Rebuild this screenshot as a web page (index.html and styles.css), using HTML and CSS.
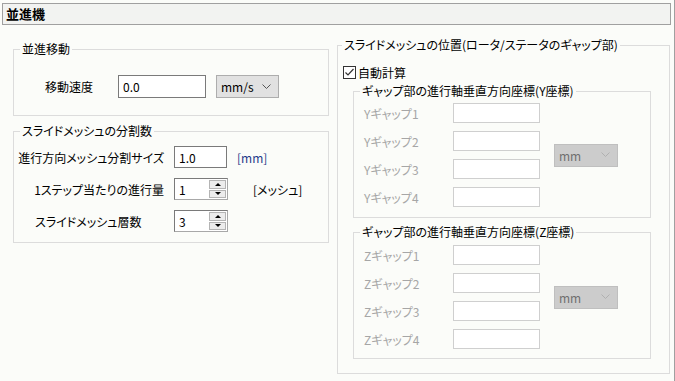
FILE: index.html
```html
<!DOCTYPE html>
<html lang="ja">
<head>
  <meta charset="UTF-8">
  <title>並進機</title>
  <link rel="stylesheet" href="styles.css">
</head>
<body>

  <div class="title-bar">並進機</div>

  <div class="content">
    <div class="col-left">
      <fieldset class="group g-move">
        <legend>並進移動</legend>
        <div class="move-row">
          <span class="move-label">移動速度</span>
          <input class="field w-speed" type="text" value="0.0">
          <div class="combo w-unit">
            <span>mm/s</span>
            <svg class="chev" width="9" height="6" viewBox="0 0 9 6"><polyline points="0.5,0.5 4.5,4.5 8.5,0.5" fill="none" stroke="#555" stroke-width="1"/></svg>
          </div>
        </div>
      </fieldset>

      <fieldset class="group g-split">
        <legend>スライドメッシュの分割数</legend>
        <div class="split-grid">
          <span class="lbl lbl-r">進行方向メッシュ分割サイズ</span>
          <input class="field w-num" type="text" value="1.0">
          <span class="unit unit-blue">[mm]</span>

          <span class="lbl lbl-r">1ステップ当たりの進行量</span>
          <div class="spin">
            <input type="text" value="1">
            <div class="spin-btns"><span class="up"></span><span class="down"></span></div>
          </div>
          <span class="unit unit-mesh">[メッシュ]</span>

          <span class="lbl lbl-l">スライドメッシュ層数</span>
          <div class="spin">
            <input type="text" value="3">
            <div class="spin-btns"><span class="up"></span><span class="down"></span></div>
          </div>
          <span></span>
        </div>
      </fieldset>
    </div>

    <fieldset class="group g-pos">
      <legend>スライドメッシュの位置(ロータ/ステータのギャップ部)</legend>
      <div class="pos-body">
        <label class="check-row">
          <span class="check">
            <svg width="11" height="11" viewBox="0 0 11 11"><polyline points="1.5,5.5 4,8 9.5,2" fill="none" stroke="#333" stroke-width="1.2"/></svg>
          </span>
          自動計算
        </label>

        <fieldset class="group sub sub-y">
          <legend>ギャップ部の進行軸垂直方向座標(Y座標)</legend>
          <div class="sub-body">
            <div class="gap-grid">
              <span class="lbl-off">Yギャップ1</span><input class="field off" type="text" disabled>
              <span class="lbl-off">Yギャップ2</span><input class="field off" type="text" disabled>
              <span class="lbl-off">Yギャップ3</span><input class="field off" type="text" disabled>
              <span class="lbl-off">Yギャップ4</span><input class="field off" type="text" disabled>
            </div>
            <div class="combo combo-off">
              <span>mm</span>
              <svg class="chev" width="9" height="6" viewBox="0 0 9 6"><polyline points="0.5,0.5 4.5,4.5 8.5,0.5" fill="none" stroke="#b0b0b0" stroke-width="1"/></svg>
            </div>
          </div>
        </fieldset>

        <fieldset class="group sub sub-z">
          <legend>ギャップ部の進行軸垂直方向座標(Z座標)</legend>
          <div class="sub-body">
            <div class="gap-grid">
              <span class="lbl-off">Zギャップ1</span><input class="field off" type="text" disabled>
              <span class="lbl-off">Zギャップ2</span><input class="field off" type="text" disabled>
              <span class="lbl-off">Zギャップ3</span><input class="field off" type="text" disabled>
              <span class="lbl-off">Zギャップ4</span><input class="field off" type="text" disabled>
            </div>
            <div class="combo combo-off">
              <span>mm</span>
              <svg class="chev" width="9" height="6" viewBox="0 0 9 6"><polyline points="0.5,0.5 4.5,4.5 8.5,0.5" fill="none" stroke="#b0b0b0" stroke-width="1"/></svg>
            </div>
          </div>
        </fieldset>
      </div>
    </fieldset>
  </div>

</body>
</html>
```

FILE: styles.css
```css
* {
  box-sizing: border-box;
}
body {
  margin: 0;
  width: 675px;
  height: 381px;
  overflow: hidden;
  border-right: 1px solid #a0a0a0;
  background: #fbfcf9;
  color: #000;
  font-family: "Noto Sans CJK JP", sans-serif;
  font-size: 12px;
  font-feature-settings: "palt";
}
.title-bar {
  margin: 3px 0 0 2px;
  width: 669px;
  height: 22px;
  padding-left: 3px;
  border: 1px solid #a0a0a0;
  background: #f2f3f1;
  font-weight: bold;
  font-size: 13px;
  line-height: 19px;
}
.content {
  display: flex;
  align-items: flex-start;
  padding-left: 13px;
}
.col-left {
  width: 316px;
  margin-top: 16px;
}

/* group boxes */
.group {
  margin: 0;
  padding: 0;
  min-width: 0;
  border: 1px solid #dcdcdc;
}
.group > legend {
  margin-left: 6px;
  padding: 0 2px;
  line-height: 16px;
}

/* inputs */
.field {
  height: 22px;
  padding: 0 4px;
  border: 1px solid #7a7a7a;
  background: #fff;
  font: inherit;
  color: #000;
  outline: none;
}
.field.off {
  width: 87px;
  height: 20px;
  border-color: #cfcfcf;
}
.w-speed {
  width: 88px;
  height: 23px;
}
.w-num {
  width: 53px;
}
.combo {
  display: flex;
  align-items: center;
  justify-content: space-between;
  height: 23px;
  padding: 0 7px 0 4px;
  border: 1px solid #adadad;
  background: #e1e1e1;
}
.w-unit {
  width: 63px;
  margin-left: 10px;
}
.combo-off {
  width: 64px;
  margin-left: 14px;
  background: #cccccc;
  border-color: #bfbfbf;
  color: #6f6f6f;
}

/* 並進移動 */
.move-row {
  display: flex;
  align-items: center;
  padding: 18px 0 17px 31px;
}
.move-label {
  width: 73px;
}

/* 分割数 */
.g-split {
  margin-top: 7px;
}
.split-grid {
  display: grid;
  grid-template-columns: 160px 54px auto;
  grid-auto-rows: 22px;
  row-gap: 10px;
  align-items: center;
  padding: 7px 0 10px 0;
}
.lbl-r {
  text-align: right;
  padding-right: 10px;
}
.lbl-l {
  padding-left: 21px;
}
.unit {
  margin-left: 9px;
}
.unit-blue {
  color: #1f3a8a;
}
.unit-mesh {
  margin-left: 25px;
}
.spin {
  display: flex;
  width: 54px;
  height: 22px;
  border: 1px solid #7a7a7a;
  border-right-color: #a8a8a8;
  border-bottom-color: #a8a8a8;
  background: #fff;
}
.spin input {
  width: 34px;
  border: none;
  padding: 0 4px;
  font: inherit;
  outline: none;
  background: transparent;
}
.spin-btns {
  display: flex;
  flex-direction: column;
  width: 18px;
  padding: 1px 1px 1px 0;
  gap: 1px;
}
.spin-btns span {
  flex: 1;
  display: flex;
  align-items: center;
  justify-content: center;
  border: 1px solid #b4b4b4;
  background: #ececec;
}
.spin-btns .up::after {
  content: "";
  border-left: 3px solid transparent;
  border-right: 3px solid transparent;
  border-bottom: 3px solid #000;
}
.spin-btns .down::after {
  content: "";
  border-left: 3px solid transparent;
  border-right: 3px solid transparent;
  border-top: 3px solid #000;
}

/* スライドメッシュの位置 */
.g-pos {
  width: 333px;
  margin: 12px 0 0 8px;
}
.g-pos > legend {
  margin-left: 4px;
}
.pos-body {
  padding: 0 18px 14px 15px;
}
.check-row {
  display: flex;
  align-items: center;
  height: 15px;
  margin: 12px 0 0 -10px;
}
.check {
  display: flex;
  align-items: center;
  justify-content: center;
  width: 13px;
  height: 13px;
  margin-right: 2px;
  border: 1px solid #333;
  background: #fff;
}
.sub-y {
  margin-top: 3px;
}
.sub-z {
  margin-top: 6px;
}
.sub-body {
  display: flex;
  align-items: center;
}
.sub-y .sub-body {
  padding: 4px 0 10px 10px;
}
.sub-z .sub-body {
  padding: 5px 0 9px 10px;
}
.gap-grid {
  display: grid;
  grid-template-columns: 89px 87px;
  grid-auto-rows: 20px;
  row-gap: 8px;
  align-items: center;
}
.lbl-off {
  color: #a6a6a6;
}
```
